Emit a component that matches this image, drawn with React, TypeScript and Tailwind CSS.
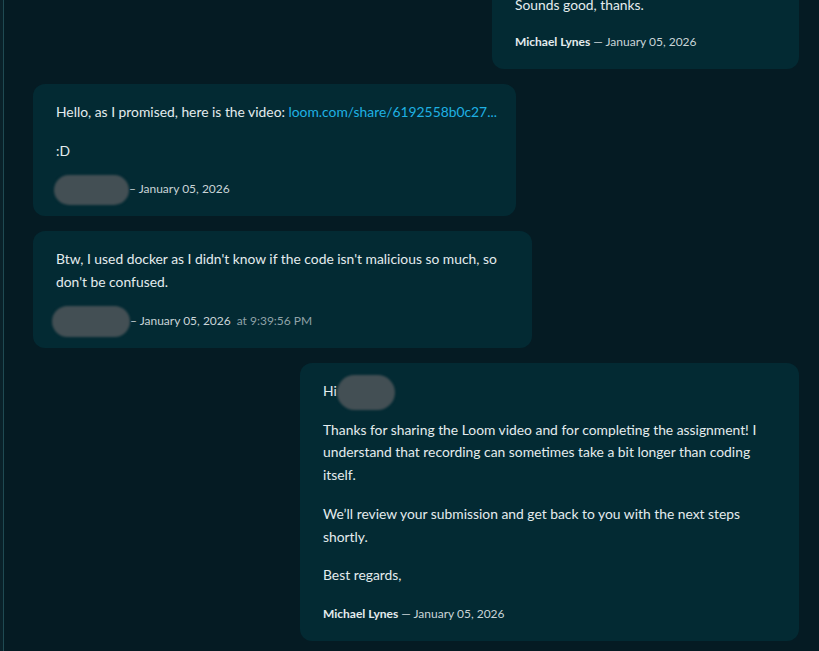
import React from "react";

function Blob({ w, h, dx = 0 }: { w: number; h: number; dx?: number }) {
  return (
    <span
      className="inline-block rounded-full bg-[#434f54] blur-[1.2px] align-middle"
      style={{ width: w, height: h, marginTop: -h, marginBottom: -h, marginLeft: dx }}
    />
  );
}

function Meta({ children }: { children: React.ReactNode }) {
  return <div className="text-[12px] leading-[21px] text-[#c9d4d7]">{children}</div>;
}

export default function App() {
  return (
    <div
      className="flex h-[651px] w-full overflow-hidden bg-[#051b23] text-[#e4ecee]"
      style={{ fontFamily: "Lato, 'Noto Sans', sans-serif" }}
    >
      <div className="w-[3px] shrink-0 bg-[#0a2129]" />
      <div className="w-px shrink-0 bg-[#1f4a52]" />
      <div className="flex flex-1 flex-col gap-[15px] pl-[29px] pr-[20px]">
        {/* top right bubble */}
        <div className="-mt-[25px] ml-auto w-[307px] rounded-xl bg-[#032a33] px-[23px] pt-[19px] pb-[17px]">
          <p className="mb-[14px] text-[13.85px] leading-[22.75px]">Sounds good, thanks.</p>
          <Meta>
            <span className="font-bold text-[#e4ecee]">Michael Lynes</span> — January 05, 2026
          </Meta>
        </div>

        {/* bubble 2 */}
        <div className="w-[483px] rounded-xl bg-[#032a33] px-[23px] pt-[17px] pb-[17px]">
          <p className="mb-4 text-[13.85px] leading-[22.75px] whitespace-nowrap">
            Hello, as I promised, here is the video:{" "}
            <span className="text-[#1fb1e3]">loom.com/share/6192558b0c27...</span>
          </p>
          <p className="mb-4 text-[13.85px] leading-[22.75px]">:D</p>
          <Meta>
            <Blob w={75} h={30} dx={-2} />– January 05, 2026
          </Meta>
        </div>

        {/* bubble 3 */}
        <div className="w-[499px] rounded-xl bg-[#032a33] px-[23px] pt-[17px] pb-[17px]">
          <p className="mb-4 text-[13.85px] leading-[22.75px]">
            Btw, I used docker as I didn't know if the code isn't malicious so much, so don't be confused.
          </p>
          <Meta>
            <Blob w={78} h={31} dx={-4} />– January 05, 2026
            <span className="ml-[6px] text-[#8fa2a7]">at 9:39:56 PM</span>
          </Meta>
        </div>

        {/* bubble 4 */}
        <div className="ml-auto w-[499px] rounded-xl bg-[#032a33] px-[23px] pt-[17px] pb-[17px]">
          <p className="mb-4 text-[13.85px] leading-[22.75px]">
            Hi
            <Blob w={58} h={35} />
          </p>
          <p className="mb-4 text-[13.85px] leading-[22.75px]">
            Thanks for sharing the Loom video and for completing the assignment! I understand that recording can sometimes take a bit longer than coding itself.
          </p>
          <p className="mb-4 text-[13.85px] leading-[22.75px]">
            We’ll review your submission and get back to you with the next steps shortly.
          </p>
          <p className="mb-4 text-[13.85px] leading-[22.75px]">Best regards,</p>
          <Meta>
            <span className="font-bold text-[#e4ecee]">Michael Lynes</span> — January 05, 2026
          </Meta>
        </div>
      </div>
    </div>
  );
}
